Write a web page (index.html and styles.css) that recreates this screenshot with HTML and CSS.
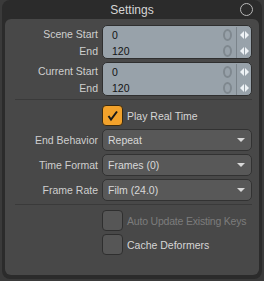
FILE: index.html
```html
<!DOCTYPE html>
<html lang="en">
<head>
    <meta charset="UTF-8">
    <title>Settings</title>
    <link rel="stylesheet" href="styles.css">
</head>
<body>
    <div class="panel">
        <div class="title-bar">
            <span class="title">Settings</span>
            <span class="close-ring"></span>
        </div>
        <div class="content">
            <div class="form-row">
                <div class="labels">
                    <label>Scene Start</label>
                    <label>End</label>
                </div>
                <div class="num-group">
                    <div class="num-row"><span class="value">0</span><span class="ghost"></span><span class="spin"><i class="tri-l"></i><i class="tri-r"></i></span></div>
                    <div class="num-row"><span class="value">120</span><span class="ghost"></span><span class="spin"><i class="tri-l"></i><i class="tri-r"></i></span></div>
                </div>
            </div>
            <div class="form-row">
                <div class="labels">
                    <label>Current Start</label>
                    <label>End</label>
                </div>
                <div class="num-group">
                    <div class="num-row"><span class="value">0</span><span class="ghost"></span><span class="spin"><i class="tri-l"></i><i class="tri-r"></i></span></div>
                    <div class="num-row"><span class="value">120</span><span class="ghost"></span><span class="spin"><i class="tri-l"></i><i class="tri-r"></i></span></div>
                </div>
            </div>

            <div class="separator"></div>

            <div class="check-row">
                <span class="checkbox checked">
                    <svg width="13" height="13" viewBox="0 0 13 13"><path d="M2.5 7 L5 10.5 L11 2.5" fill="none" stroke="#1a1a1a" stroke-width="2"/></svg>
                </span>
                <span class="check-label">Play Real Time</span>
            </div>

            <div class="form-row select-row">
                <label>End Behavior</label>
                <div class="select"><span>Repeat</span><i class="tri-d"></i></div>
            </div>
            <div class="form-row select-row">
                <label>Time Format</label>
                <div class="select"><span>Frames (0)</span><i class="tri-d"></i></div>
            </div>
            <div class="form-row select-row">
                <label>Frame Rate</label>
                <div class="select"><span>Film (24.0)</span><i class="tri-d"></i></div>
            </div>

            <div class="separator lower"></div>

            <div class="check-row">
                <span class="checkbox"></span>
                <span class="check-label disabled">Auto Update Existing Keys</span>
            </div>
            <div class="check-row">
                <span class="checkbox"></span>
                <span class="check-label">Cache Deformers</span>
            </div>
        </div>
    </div>
</body>
</html>
```

FILE: styles.css
```css
html, body {
    margin: 0;
    padding: 0;
}
body {
    width: 264px;
    height: 281px;
    background-color: #3a3a3a;
    font-family: "Liberation Sans", Arial, sans-serif;
    font-size: 10.5px;
    color: #d2d2d2;
    overflow: hidden;
}
.panel {
    margin: 0 2px;
    height: 279px;
    background-color: #2b2b2b;
    border-radius: 8px;
    display: flex;
    flex-direction: column;
    box-sizing: border-box;
    padding: 0 3px 4px;
}
.title-bar {
    height: 19px;
    display: flex;
    align-items: center;
    justify-content: center;
    position: relative;
}
.title {
    font-size: 12px;
    color: #d6d6d6;
}
.close-ring {
    position: absolute;
    right: 6px;
    top: 3px;
    width: 11px;
    height: 11px;
    border: 1.5px solid #b8b8b8;
    border-radius: 50%;
}
.content {
    flex: 1;
    background-color: #484848;
    border-radius: 6px;
    padding: 6px 7px 0 0;
}
.form-row {
    display: grid;
    grid-template-columns: 93px 150px;
    column-gap: 4px;
    margin-bottom: 2px;
}
.labels {
    display: flex;
    flex-direction: column;
    padding-top: 1px;
}
.labels label {
    height: 17px;
    line-height: 16px;
    text-align: right;
    color: #cfcfcf;
    white-space: nowrap;
}
.num-group {
    height: 34px;
    box-sizing: border-box;
    background-color: #98a2aa;
    border: 1px solid #2f2f2f;
    border-radius: 5px;
    overflow: hidden;
    padding-top: 1px;
}
.num-row {
    height: 16px;
    display: flex;
    align-items: center;
}
.value {
    flex: 1;
    padding-left: 9px;
    color: #141414;
}
.ghost {
    width: 5px;
    height: 8px;
    border: 2px solid #7f888f;
    border-radius: 50%;
    margin-right: 4px;
}
.spin {
    width: 14px;
    height: 17px;
    border-left: 1px solid #7b848b;
    display: flex;
    align-items: center;
    justify-content: center;
    gap: 1px;
}
.tri-l {
    width: 0;
    height: 0;
    border-top: 4px solid transparent;
    border-bottom: 4px solid transparent;
    border-right: 4px solid #eef2f5;
}
.tri-r {
    width: 0;
    height: 0;
    border-top: 4px solid transparent;
    border-bottom: 4px solid transparent;
    border-left: 4px solid #eef2f5;
}
.separator {
    height: 1px;
    background-color: #3a3a3a;
    margin: 2px 0 5px 10px;
}
.separator.lower {
    margin: 2px 0 5px 10px;
}
.check-row {
    display: flex;
    align-items: center;
    margin-left: 97px;
    margin-bottom: 3px;
}
.checkbox {
    width: 21px;
    height: 21px;
    box-sizing: border-box;
    background-color: #565656;
    border: 1px solid #2f2f2f;
    border-radius: 4px;
    display: flex;
    align-items: center;
    justify-content: center;
}
.checkbox.checked {
    background-color: #f3a22b;
    border-color: #3a2a10;
}
.check-label {
    margin-left: 4px;
    color: #d6d6d6;
    white-space: nowrap;
}
.check-label.disabled {
    color: #7c7c7c;
    letter-spacing: -0.2px;
}
.select-row {
    margin-bottom: 3px;
}
.select-row label {
    height: 22px;
    line-height: 22px;
    text-align: right;
    color: #cfcfcf;
    white-space: nowrap;
}
.select {
    height: 22px;
    box-sizing: border-box;
    background-color: #585858;
    border: 1px solid #323232;
    border-radius: 5px;
    display: flex;
    align-items: center;
    padding: 0 6px 0 5px;
}
.select span {
    flex: 1;
    color: #d8d8d8;
}
.tri-d {
    width: 0;
    height: 0;
    border-left: 4px solid transparent;
    border-right: 4px solid transparent;
    border-top: 4px solid #d8d8d8;
}
```
